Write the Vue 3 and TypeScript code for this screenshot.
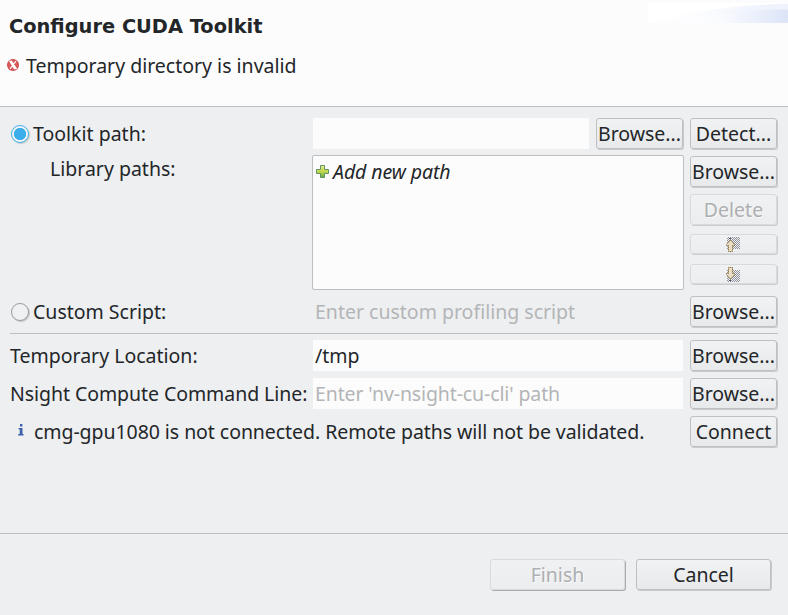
<script setup lang="ts">
import { ref } from 'vue'

const source = ref<'toolkit' | 'script'>('toolkit')
const toolkitPath = ref('')
const scriptPath = ref('')
const tempLocation = ref('/tmp')
const cliPath = ref('')
</script>

<template>
  <main class="dialog">
    <header class="banner">
      <h1>Configure CUDA Toolkit</h1>
      <p class="message">
        <svg class="error" width="12" height="12" viewBox="0 0 12 12">
          <circle cx="6" cy="6" r="6" fill="#d04a4a" />
          <circle cx="6" cy="6" r="5" fill="#d85a5a" />
          <path d="M2.8 2.4L4.6 2.4 9.4 9.6H7.4zM9 2.2L3 9.8" fill="#fff" stroke="#fff" stroke-width="1.1" />
        </svg>
        <span>Temporary directory is invalid</span>
      </p>
      <svg class="swoosh" width="140" height="20" viewBox="0 0 140 20">
        <defs>
          <linearGradient id="wave">
            <stop offset="0" stop-color="#fff" />
            <stop offset=".35" stop-color="#fafbfe" />
            <stop offset=".7" stop-color="#eaeffb" />
            <stop offset="1" stop-color="#dce4f7" />
          </linearGradient>
        </defs>
        <rect width="140" height="20" fill="#fff" />
        <path d="M0 20C40 9 85 2 140 1v19z" fill="url(#wave)" opacity=".6" />
        <path d="M50 20C75 8 105 3 140 2v4C115 6 90 8 60 20z" fill="#f0f4fd" opacity=".7" />
        <path d="M35 20C65 11 100 6 140 7v13z" fill="url(#wave)" />
      </svg>
    </header>

    <section class="content">
      <div class="row">
        <label class="caption radio">
          <input v-model="source" type="radio" value="toolkit" /><span>Toolkit path:</span>
        </label>
        <input v-model="toolkitPath" class="field" type="text" />
        <button class="btn">Browse...</button>
        <button class="btn">Detect...</button>
      </div>

      <div class="row libraries">
        <span class="caption indent">Library paths:</span>
        <div class="list">
          <div class="item">
            <svg width="14" height="14" viewBox="0 0 14 14">
              <defs>
                <linearGradient id="plus" x2="0" y2="1">
                  <stop offset="0" stop-color="#e4ed8a" />
                  <stop offset=".5" stop-color="#c3d84b" />
                  <stop offset="1" stop-color="#5faa45" />
                </linearGradient>
              </defs>
              <path d="M5.5 1.5h4v4h4v4h-4v4h-4v-4h-4v-4h4z" fill="url(#plus)" stroke="#609467" />
            </svg>
            <em>Add new path</em>
          </div>
        </div>
        <div class="actions">
          <button class="btn">Browse...</button>
          <button class="btn" disabled>Delete</button>
          <button class="btn small" disabled aria-label="Move up">
            <svg width="15" height="15" viewBox="0 0 15 15">
              <defs>
                <pattern id="dots" width="2" height="2" patternUnits="userSpaceOnUse">
                  <rect width="1" height="1" fill="#8f9298" />
                  <rect x="1" y="1" width="1" height="1" fill="#8f9298" />
                </pattern>
              </defs>
              <rect x="1" width="13" height="12" fill="url(#dots)" />
              <path d="M4.5 3.2l4 4v1.3h-2v6h-4v-6h-2V7.2z" fill="#eadfc6" stroke="#8a6c38" stroke-dasharray="1.4 .6" />
              <rect x="3" y="1" width="2" height="1" fill="#46506a" />
            </svg>
          </button>
          <button class="btn small" disabled aria-label="Move down">
            <svg width="15" height="15" viewBox="0 0 15 15">
              <rect x="1" y="3" width="13" height="12" fill="url(#dots)" />
              <path d="M4.5 11.8l4-4V6.5h-2v-6h-4v6h-2v1.3z" fill="#eadfc6" stroke="#8a6c38" stroke-dasharray="1.4 .6" />
              <rect x="3" y="13" width="2" height="1" fill="#46506a" />
            </svg>
          </button>
        </div>
      </div>

      <div class="row">
        <label class="caption radio">
          <input v-model="source" type="radio" value="script" /><span>Custom Script:</span>
        </label>
        <input v-model="scriptPath" class="field" type="text" placeholder="Enter custom profiling script" disabled />
        <button class="btn">Browse...</button>
      </div>

      <hr />

      <div class="row">
        <span class="caption">Temporary Location:</span>
        <input v-model="tempLocation" class="field" type="text" />
        <button class="btn">Browse...</button>
      </div>
      <div class="row">
        <span class="caption snug">Nsight Compute Command Line:</span>
        <input v-model="cliPath" class="field tight" type="text" placeholder="Enter 'nv-nsight-cu-cli' path" />
        <button class="btn">Browse...</button>
      </div>
      <div class="row">
        <p class="status">
          <svg width="6" height="12" viewBox="0 0 6 12">
            <path d="M2 0h2.4v2.4H2zM.5 4h4v6h1v1.5H.2V10h1.5V5.3H.5z" fill="#3c5fae" />
          </svg>
          <span>cmg-gpu1080 is not connected. Remote paths will not be validated.</span>
        </p>
        <button class="btn">Connect</button>
      </div>
    </section>

    <footer class="footer">
      <button class="btn wide finish" disabled>Finish</button>
      <button class="btn wide">Cancel</button>
    </footer>
  </main>
</template>

<style>
body {
  margin: 0;
  background: #eeeff1;
}
</style>

<style scoped>
* {
  box-sizing: border-box;
}
.dialog {
  display: flex;
  flex-direction: column;
  height: 615px;
  overflow: hidden;
  background: #eeeff1;
  color: #232629;
  font: 19.5px/27px "Noto Sans", sans-serif;
  white-space: nowrap;
}
.banner {
  position: relative;
  flex: none;
  height: 107px;
  padding: 13px 7px 0;
  background: #fcfcfc;
  border-bottom: 1px solid #bcbec0;
}
h1 {
  margin: 0 0 0 2px;
  font: bold 19.4px/28px "DejaVu Sans", sans-serif;
}
.message {
  display: flex;
  align-items: center;
  gap: 7px;
  margin: 11px 0 0;
}
.error {
  margin-bottom: 1px;
}
.swoosh {
  position: absolute;
  top: 3px;
  right: 0;
}
.content {
  flex: 1;
  display: flex;
  flex-direction: column;
  gap: 7px;
  padding: 11px 11px 0 10px;
}
.row {
  display: flex;
  align-items: center;
  gap: 7px;
  height: 31px;
}
.caption {
  flex: none;
  width: 296px;
}
.radio {
  display: flex;
  align-items: center;
  gap: 4px;
}
.radio input {
  appearance: none;
  width: 18px;
  height: 18px;
  margin: 1px 0 0 1px;
  border: 1px solid #9a9c9e;
  border-radius: 50%;
  background: #f0f1f2;
  box-shadow: 1px 1px 1px #c6c7c9;
}
.radio input:checked {
  border-color: #3daee9;
  background: radial-gradient(circle, #3daee9 5.8px, #f4f5f6 6.5px);
}
.field {
  flex: 1;
  min-width: 0;
  height: 31px;
  padding: 0 2px;
  border: 0;
  outline: 0;
  background: #fcfcfc;
  color: inherit;
  font: inherit;
}
.field:disabled {
  background: transparent;
}
.field::placeholder {
  color: #b4b5b7;
  opacity: 1;
}
.tight {
  letter-spacing: -0.12px;
}
.snug {
  letter-spacing: -0.06px;
}
.btn {
  display: flex;
  align-items: center;
  justify-content: center;
  flex: none;
  width: 87px;
  height: 31px;
  padding: 0;
  border: 1px solid #bec0c2;
  border-radius: 3px;
  background: linear-gradient(#f1f2f3, #e8e9eb);
  box-shadow: 1px 1px 0 #c8c9cb;
  color: #232629;
  font: inherit;
}
.btn:disabled {
  border-color: #d8dadc;
  background: linear-gradient(#f0f1f2, #ecedef);
  box-shadow: 1px 1px 0 #cbcdcf;
  color: #adafb1;
  text-shadow: 1px 1px 0 #fafafa;
}
.libraries {
  align-items: flex-start;
  height: 133px;
}
.indent {
  width: 295px;
  margin-top: -1px;
  padding-left: 40px;
}
.list {
  flex: 1;
  height: 135px;
  margin: -1px -1px 0 0;
  padding: 2px;
  border: 1px solid #bcbec0;
  border-radius: 2px;
  background: #fcfcfc;
}
.item {
  display: flex;
  align-items: center;
  gap: 4px;
}
.item svg {
  margin-bottom: 2px;
}
.item em {
  letter-spacing: -0.08px;
}
.actions {
  display: flex;
  flex-direction: column;
  gap: 7px;
}
.btn.small {
  height: 20px;
  margin-top: 2px;
}
.btn.small + .btn.small {
  margin-top: 3px;
}
hr {
  width: 768px;
  height: 1px;
  margin: -1px 0;
  border: 0;
  background: #bcbec0;
}
.status {
  display: flex;
  align-items: center;
  flex: 1;
  gap: 10px;
  margin: 0;
  padding-left: 8px;
  letter-spacing: -0.06px;
}
.status svg {
  margin-bottom: 3px;
}
.footer {
  display: flex;
  flex: none;
  gap: 11px;
  justify-content: flex-end;
  height: 82px;
  padding: 25px 17px 0;
  border-top: 1px solid #bcbec0;
}
.btn.wide {
  width: 135px;
}
.btn.finish {
  box-shadow: 1px 1px 0 #a9abad;
}
</style>
